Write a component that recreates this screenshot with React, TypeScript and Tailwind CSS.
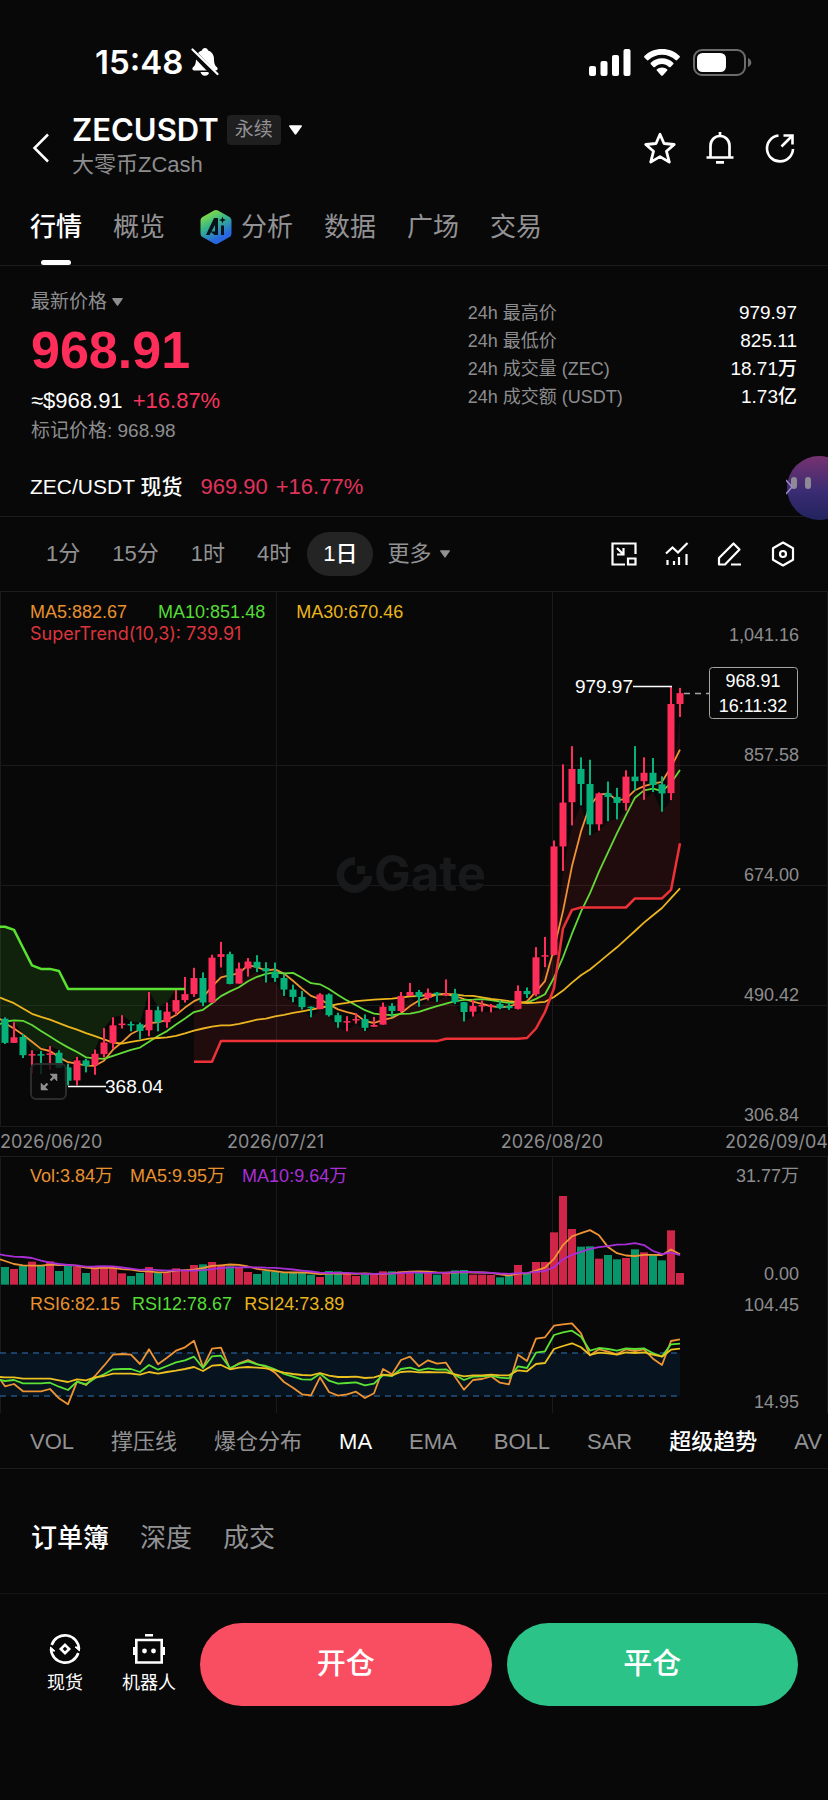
import type { ReactNode } from "react";
import clsx from "clsx";

const STEP = 9;
const COUNT = 76;
const xAt = (i: number) => 5 + i * STEP;

// [direction, high, body top, body bottom, low], measured down from the top of the plot
type Candle = [0 | 1, number, number, number, number];

const candles: Candle[] = [
	[0, 1218, 1222, 1291, 1294], [1, 1232, 1275, 1291, 1291], [0, 1266, 1274, 1326, 1334], [1, 1312, 1323, 1326, 1378],
	[0, 1314, 1323, 1326, 1380], [1, 1300, 1321, 1324, 1368], [0, 1312, 1319, 1362, 1362], [0, 1350, 1361, 1399, 1412],
	[1, 1331, 1341, 1398, 1412], [0, 1336, 1341, 1357, 1375], [1, 1310, 1322, 1354, 1382], [1, 1249, 1290, 1323, 1333],
	[1, 1218, 1241, 1292, 1308], [1, 1212, 1236, 1239, 1250], [0, 1230, 1237, 1240, 1258], [0, 1233, 1238, 1257, 1281],
	[1, 1146, 1197, 1255, 1272], [0, 1187, 1198, 1232, 1258], [1, 1176, 1202, 1232, 1248], [1, 1138, 1169, 1202, 1212],
	[1, 1103, 1152, 1169, 1176], [1, 1077, 1106, 1152, 1160], [0, 1090, 1106, 1176, 1186], [1, 1040, 1048, 1176, 1177],
	[1, 1003, 1038, 1046, 1076], [0, 1031, 1038, 1123, 1124], [1, 1062, 1079, 1122, 1122], [1, 1049, 1059, 1079, 1102],
	[0, 1041, 1060, 1076, 1089], [0, 1061, 1078, 1087, 1119], [0, 1062, 1088, 1106, 1117], [0, 1096, 1106, 1139, 1157],
	[0, 1125, 1139, 1160, 1175], [0, 1143, 1160, 1189, 1196], [0, 1187, 1188, 1192, 1218], [1, 1149, 1153, 1195, 1195],
	[0, 1150, 1153, 1212, 1216], [0, 1205, 1212, 1232, 1248], [1, 1215, 1229, 1232, 1258], [1, 1206, 1223, 1227, 1236],
	[0, 1210, 1223, 1248, 1257], [1, 1217, 1240, 1245, 1245], [1, 1176, 1188, 1239, 1239], [0, 1178, 1186, 1200, 1218],
	[1, 1146, 1157, 1200, 1203], [1, 1120, 1146, 1157, 1157], [0, 1140, 1146, 1160, 1188], [1, 1136, 1148, 1163, 1170],
	[0, 1146, 1148, 1153, 1174], [1, 1110, 1151, 1155, 1158], [0, 1137, 1151, 1175, 1180], [0, 1174, 1175, 1203, 1230],
	[1, 1168, 1186, 1202, 1216], [1, 1170, 1183, 1186, 1202], [1, 1180, 1184, 1187, 1204], [0, 1170, 1180, 1192, 1195],
	[0, 1176, 1186, 1192, 1197], [1, 1127, 1143, 1194, 1196], [0, 1133, 1143, 1152, 1163], [1, 1018, 1047, 1152, 1158],
	[1, 989, 1041, 1045, 1075], [1, 714, 731, 1040, 1042], [1, 497, 606, 731, 801], [1, 445, 510, 605, 671],
	[0, 477, 510, 553, 614], [0, 484, 553, 668, 699], [1, 577, 580, 668, 686], [0, 546, 579, 590, 659],
	[0, 564, 590, 607, 654], [1, 514, 532, 607, 629], [0, 445, 532, 545, 572], [1, 477, 521, 545, 598],
	[0, 479, 521, 556, 576], [0, 531, 554, 580, 632], [1, 275, 325, 579, 599], [1, 279, 294, 325, 362],
];

const volumes = [
	411, 417, 408, 395, 405, 394, 423, 405, 411, 429, 408, 409, 411, 430, 438, 429, 411, 428, 427, 415, 420, 405, 403, 396,
	405, 409, 411, 426, 432, 423, 424, 429, 429, 429, 434, 441, 423, 424, 432, 438, 434, 430, 424, 424, 424, 423, 427, 428,
	434, 429, 421, 420, 434, 434, 435, 442, 438, 405, 429, 396, 396, 307, 198, 297, 350, 349, 386, 375, 388, 384, 358, 367,
	375, 391, 301, 429,
];

const rsi6 = [
	769, 762, 784, 784, 784, 777, 805, 823, 755, 765, 738, 707, 674, 672, 674, 702, 658, 703, 683, 662, 652, 632, 712, 656,
	653, 717, 700, 690, 702, 711, 728, 756, 773, 793, 796, 742, 786, 797, 793, 785, 804, 790, 717, 733, 690, 680, 709, 691,
	701, 698, 740, 779, 750, 747, 739, 758, 763, 674, 693, 626, 622, 587, 583, 580, 610, 676, 658, 665, 673, 658, 663, 658,
	686, 705, 633, 628,
];
const rsi12 = [
	753, 750, 760, 760, 760, 758, 770, 780, 755, 763, 745, 733, 718, 717, 717, 726, 705, 719, 708, 697, 691, 680, 714, 679,
	677, 714, 702, 694, 703, 708, 718, 732, 740, 748, 749, 731, 752, 761, 759, 757, 766, 761, 735, 738, 717, 713, 721, 715,
	719, 718, 735, 750, 740, 739, 737, 743, 745, 709, 714, 668, 664, 615, 607, 602, 620, 662, 654, 657, 662, 655, 657, 655,
	670, 679, 643, 641,
];
const rsi24 = [
	742, 742, 746, 746, 746, 746, 751, 756, 748, 751, 742, 738, 731, 731, 731, 734, 726, 731, 726, 722, 717, 711, 723, 707,
	705, 718, 713, 711, 713, 715, 721, 728, 732, 735, 736, 729, 737, 741, 741, 740, 744, 742, 734, 736, 726, 724, 727, 726,
	727, 727, 733, 739, 736, 736, 734, 736, 736, 721, 724, 702, 699, 657, 648, 640, 652, 675, 668, 670, 674, 667, 669, 667,
	674, 680, 659, 656,
];

const priceY = (v: number) => v * 0.3508;
const subY = (v: number) => v / 3;

// Simple moving average; `seed` covers the candles that lack enough history on screen.
function movingAverage(values: number[], size: number, seed: number[]) {
	return values.map((_, i) =>
		i < size - 1 ? seed[i] : values.slice(i - size + 1, i + 1).reduce((a, b) => a + b, 0) / size,
	);
}

function points(values: number[], y: (v: number) => number, start = 0) {
	return values.map((v, i) => `${xAt(i + start)},${y(v).toFixed(1)}`).join(" ");
}

// Same, but the line enters from the left edge of the plot.
function pointsFrom(first: number, values: number[], y: (v: number) => number) {
	return `0,${y(first).toFixed(1)} ${points(values, y)}`;
}

const closes = candles.map(([up, , top, bottom]) => (up ? top : bottom));
const ma5 = movingAverage(closes, 5, [1235, 1250, 1268, 1288]);
const ma10 = movingAverage(closes, 10, [1230, 1227, 1228, 1240, 1257, 1273, 1289, 1304, 1317]);
const ma30 = movingAverage(closes, 30, [
	1168, 1178, 1193, 1208, 1217, 1225, 1235, 1245, 1253, 1263, 1272, 1281, 1290, 1293, 1288, 1284, 1279, 1277, 1275, 1271,
	1264, 1256, 1250, 1245, 1241, 1241, 1237, 1231, 1225,
]);
const volMa5 = movingAverage(volumes, 5, [393, 402, 406, 407]);
const volMa10 = movingAverage(volumes, 10, [376, 380, 381, 384, 392, 398, 402, 405, 406]);

const trendDown = [960, 969, 1020, 1070, 1080, 1080, 1086, ...Array(14).fill(1137)];
const trendUp = [
	1345, 1345, 1345, ...Array(25).fill(1286), ...Array(9).fill(1279), 1277, 1250, 1203, 1135, 965, 912, 905, 905, 905, 905,
	905, 905, 879, 879, 879, 879, 855, 722,
];
const TREND_UP_START = 21;

const areaDown = `${pointsFrom(960, trendDown, priceY)} ${candles
	.slice(0, TREND_UP_START)
	.map((c, i) => `${xAt(i)},${priceY(Math.max(c[1], trendDown[i]))}`)
	.reverse()
	.join(" ")} 0,${priceY(1218)}`;
const areaUp = `${points(trendUp, priceY, TREND_UP_START)} ${candles
	.slice(TREND_UP_START)
	.map((c, i) => `${xAt(i + TREND_UP_START)},${priceY(c[4])}`)
	.reverse()
	.join(" ")}`;

function Line({ pts, color, width = 1.8 }: { pts: string; color: string; width?: number }) {
	return <polyline points={pts} fill="none" stroke={color} strokeWidth={width} strokeLinejoin="round" />;
}

function Caret({ className }: { className?: string }) {
	return (
		<svg viewBox="0 0 12 9" className={clsx("fill-current", className)} aria-hidden="true">
			<path d="M.8 0h10.4c.7 0 1 .7.6 1.2L6.7 8.5a.9.9 0 0 1-1.4 0L.2 1.2C-.2.7.1 0 .8 0z" />
		</svg>
	);
}

function StatusBar() {
	return (
		<div className="flex h-11 items-center justify-between pr-[75px] pl-[95px]">
			<div className="flex items-center gap-2 font-[Inter] font-semibold text-[33px] leading-[44px]">
				15:48
				<svg viewBox="0 0 28 30" className="h-[30px] w-7" aria-hidden="true">
					<path
						d="M14 1c1.6 0 2.8 1 3 2.400 4 1.200 6 4.600 6 8.600 0 5.500 1.300 6.500 3.200 8.600.9 1 .5 2.900-1.200 2.900H3c-1.700 0-2.100-1.900-1.200-2.900C3.700 18.500 5 17.500 5 12c0-4 2-7.400 6-8.600C11.200 2 12.400 1 14 1zM9.500 25h9c-.5 2.200-2.300 3.700-4.500 3.700S10 27.200 9.500 25z"
						fill="#fff"
					/>
					<path d="M-1 2 25 29" stroke="#080808" strokeWidth="6" />
					<path d="M1.5 2.5 26.5 27" stroke="#fff" strokeWidth="2.200" strokeLinecap="round" />
				</svg>
			</div>
			<div className="flex items-center gap-[13px]">
				<svg viewBox="0 0 42 27" className="h-[27px] w-[42px]" fill="#fff" aria-label="信号">
					<rect x="0" y="17" width="7" height="10" rx="2" />
					<rect x="11.5" y="12" width="7" height="15" rx="2" />
					<rect x="23" y="6" width="7" height="21" rx="2" />
					<rect x="34.5" y="0" width="7" height="27" rx="2" />
				</svg>
				<svg viewBox="0 0 36 27" className="h-[27px] w-9" fill="#fff" aria-label="无线网络">
					<path d="M18 0c7 0 13.200 2.600 17.600 7 .5.5.5 1.100 0 1.600l-2.500 2.500c-.5.5-1.100.5-1.600 0C28 7.700 23.200 5.700 18 5.700S8 7.700 4.500 11.100c-.5.5-1.100.5-1.600 0L.4 8.600c-.5-.5-.5-1.100 0-1.600C4.800 2.600 11 0 18 0z" />
					<path d="M18 9.300c4.400 0 8.300 1.600 11.200 4.400.5.5.5 1.100 0 1.600l-2.600 2.600c-.5.5-1.100.4-1.600 0-1.900-1.700-4.300-2.800-7-2.800s-5.100 1.100-7 2.800c-.5.400-1.100.5-1.600 0l-2.600-2.600c-.5-.5-.5-1.100 0-1.600 2.900-2.800 6.800-4.400 11.200-4.400z" />
					<path d="M18 18.400c1.900 0 3.700.7 5 1.800.5.4.5 1.100 0 1.600l-4.200 4.600c-.5.5-1.100.5-1.600 0L13 21.800c-.5-.5-.5-1.200 0-1.600 1.300-1.100 3.100-1.800 5-1.800z" />
				</svg>
				<svg viewBox="0 0 60 27" className="h-[27px] w-[60px]" aria-label="电量">
					<rect x="1" y="1" width="51" height="25" rx="8" fill="none" stroke="#6c6c6c" strokeWidth="2" />
					<rect x="4" y="4" width="29" height="19" rx="5.5" fill="#fff" />
					<path d="M55 9c2 .6 3.300 2.300 3.300 4.500S57 17.400 55 18z" fill="#6c6c6c" />
				</svg>
			</div>
		</div>
	);
}

function Header() {
	return (
		<header className="flex items-center justify-between pt-[30px] pr-8 pl-8">
			<div className="flex items-center">
				<button type="button" aria-label="返回" className="w-10 pt-[2px]">
					<svg viewBox="0 0 18 30" className="h-[30px] w-[18px]" fill="none" stroke="#fff" strokeWidth="2.5">
						<path d="M16 1.500 2.500 15 16 28.500" />
					</svg>
				</button>
				<div>
					<div className="flex items-center">
						<h1 className="font-[Inter] font-semibold text-[31px] leading-8">ZECUSDT</h1>
						<span className="ml-2 rounded bg-[#1f1f20] px-2 text-[19px] text-[#929294] leading-[30px]">永续</span>
						<button type="button" aria-label="切换合约" className="ml-2">
							<Caret className="h-[10px] w-[13px]" />
						</button>
					</div>
					<p className="mt-[5px] text-[#8d8d8f] text-[22px] leading-7">大零币ZCash</p>
				</div>
			</div>
			<div className="flex gap-7 pt-[2px]">
				<button type="button" aria-label="收藏">
					<svg viewBox="0 0 32 32" className="size-8" fill="none" stroke="#fff" strokeWidth="2.800" strokeLinejoin="round">
						<path d="m16 2.200 4 9.300 10.200 1-7.700 6.800 2.800 10.800L16 24.600 6.700 30.100l2.800-10.800-7.700-6.800 10.200-1z" />
					</svg>
				</button>
				<button type="button" aria-label="提醒">
					<svg viewBox="0 0 32 32" className="size-8" fill="none" stroke="#fff" strokeWidth="2.700">
						<path d="M16 0v4M6.500 25V13.500a9.500 9.500 0 0 1 19 0V25M2.500 25.500h27M12 30.300h8" />
					</svg>
				</button>
				<button type="button" aria-label="分享">
					<svg viewBox="0 0 32 32" className="size-8" fill="none" stroke="#fff" strokeWidth="2.600">
						<path d="M14.500 3.500A13 13 0 1 0 29 17M17.500 14.500 28 4M19.500 3.500h9v9" />
					</svg>
				</button>
			</div>
		</header>
	);
}

function AiBadge() {
	return (
		<svg viewBox="0 0 32 36" className="h-9 w-8" aria-hidden="true">
			<defs>
				<linearGradient id="ai" x1="0.25" y1="0" x2="0.75" y2="1">
					<stop offset="0" stopColor="#8fe33c" />
					<stop offset="0.4" stopColor="#35b48b" />
					<stop offset="0.8" stopColor="#2768e0" />
				</linearGradient>
			</defs>
			<path
				d="M14 1.500a4 4 0 0 1 4 0l11.500 6.600a4 4 0 0 1 2 3.500v12.800a4 4 0 0 1-2 3.500L18 34.500a4 4 0 0 1-4 0L2.500 27.900a4 4 0 0 1-2-3.500V11.600a4 4 0 0 1 2-3.500z"
				fill="url(#ai)"
			/>
			<path d="M6 26 14 9h4v17h-3.500l-4-3.500h4.500v-6.500L9.500 26zM21 16.500h3V26h-3z" fill="#07131a" />
			<path d="m22.500 7.500.9 2.600 2.600.9-2.600.9-.9 2.600-.9-2.600-2.600-.9 2.600-.9z" fill="#07131a" />
		</svg>
	);
}

function MainTabs() {
	const tabs = ["行情", "概览", "分析", "数据", "广场", "交易"];
	return (
		<nav className="mt-[30px] flex gap-[31px] border-[#1c1c1d] border-b px-[30px] text-[26px] leading-9">
			{tabs.map((tab, i) => (
				<button
					type="button"
					key={tab}
					className={clsx("flex flex-col items-center", i === 0 ? "font-medium text-white" : "text-[#929294]", i === 2 && "ml-1")}
				>
					<span className="flex items-center gap-[9px]">
						{i === 2 && <AiBadge />}
						{tab}
					</span>
					<span className={clsx("mt-[15px] h-[5px] w-[30px] rounded-sm", i === 0 && "bg-white")} />
				</button>
			))}
		</nav>
	);
}

function PriceSummary() {
	const stats = [
		["24h 最高价", "979.97"],
		["24h 最低价", "825.11"],
		["24h 成交量 (ZEC)", "18.71万"],
		["24h 成交额 (USDT)", "1.73亿"],
	];
	return (
		<section className="flex justify-between px-[31px] pt-[22px]">
			<div>
				<button type="button" className="flex items-center gap-[5px] text-[#8d8d8f] text-[19px] leading-7">
					最新价格
					<Caret className="h-2 w-[11px]" />
				</button>
				<p className="mt-1 font-bold text-[#ff2d5a] text-[52px] leading-[60px]">968.91</p>
				<p className="mt-[5px] text-[22px] leading-8">
					≈$968.91 <span className="ml-1 text-[#f5345f]">+16.87%</span>
				</p>
				<p className="text-[#8d8d8f] text-[19px] leading-7">标记价格: 968.98</p>
			</div>
			<dl className="mt-[11px] w-[43%] text-[19px] leading-7">
				{stats.map(([label, value]) => (
					<div key={label} className="flex justify-between">
						<dt className="text-[#8d8d8f] text-[18px]">{label}</dt>
						<dd className="font-medium">{value}</dd>
					</div>
				))}
			</dl>
		</section>
	);
}

function SpotRow() {
	return (
		<a href="#spot" className="relative flex items-center border-[#1c1c1d] border-b px-[30px] pt-7 pb-[15px] text-[22px] leading-7">
			<span className="font-medium text-[21px]">ZEC/USDT 现货</span>
			<span className="ml-[18px] text-[#e0335c]">969.90</span>
			<span className="ml-2 text-[#e0335c]">+16.77%</span>
			<svg viewBox="0 0 42 64" className="absolute right-0 -bottom-1 h-16 w-[42px]" aria-hidden="true">
				<defs>
					<linearGradient id="orb" x1="0" y1="0" x2="0" y2="1">
						<stop offset="0" stopColor="#75326f" />
						<stop offset="0.55" stopColor="#3b2c73" />
						<stop offset="1" stopColor="#22235e" />
					</linearGradient>
				</defs>
				<circle cx="33" cy="32" r="32" fill="url(#orb)" />
				<rect x="5" y="21" width="6" height="12" rx="3" fill="#8e8996" />
				<rect x="19" y="21" width="6" height="12" rx="3" fill="#8e8996" />
				<path d="m0 24 6 7-6 7" fill="none" stroke="#9c86cf" strokeWidth="1.5" />
			</svg>
		</a>
	);
}

function ToolIcon({ label, children }: { label: string; children: ReactNode }) {
	return (
		<button type="button" aria-label={label}>
			<svg viewBox="0 0 26 26" className="size-[26px]" fill="none" stroke="#fff" strokeWidth="2.2">
				{children}
			</svg>
		</button>
	);
}

function IntervalBar() {
	const intervals = ["1分", "15分", "1时", "4时", "1日"];
	return (
		<div className="flex items-center justify-between border-[#1c1c1d] border-b py-[15px] pr-8 pl-[30px] text-[22px] leading-[44px]">
			<div className="flex">
				{intervals.map((interval) => (
					<button
						type="button"
						key={interval}
						className={clsx("rounded-full px-4", interval === "1日" ? "bg-[#242425] font-medium text-white" : "text-[#929294]")}
					>
						{interval}
					</button>
				))}
				<button type="button" className="flex items-center gap-2 pl-[14px] text-[#929294]">
					更多
					<Caret className="h-2 w-[10px]" />
				</button>
			</div>
			<div className="flex gap-[27px]">
				<ToolIcon label="小窗">
					<path d="M14 23.500H1.500V2.500h23V13M6 7l6 6M12.500 7v6.500H6" />
					<path d="M17 17.500h7.500v6H17z" />
				</ToolIcon>
				<ToolIcon label="指标">
					<path d="m2 12.500 6.500-6 5.500 5 9.500-9.500M3.500 19v5M10 20v4M15 16v8M22.500 13v11" />
				</ToolIcon>
				<ToolIcon label="画线">
					<path d="M2 23.500v-6.500L16.500 2.500 22.500 8.500 8 23.500zM14 23.500h10" strokeLinejoin="round" />
				</ToolIcon>
				<ToolIcon label="设置">
					<path d="M13 1.500 23 7.300v11.400L13 24.500 3 18.700V7.300z" strokeLinejoin="round" />
					<circle cx="13" cy="13" r="3" />
				</ToolIcon>
			</div>
		</div>
	);
}

const GRID = "#1a1a1b";

function PriceChart() {
	const axis: [string, number][] = [["1,041.16", 51], ["857.58", 171], ["674.00", 291], ["490.42", 411], ["306.84", 531]];
	return (
		<div className="relative">
			<svg viewBox="0 2 828 535" className="block w-full" role="img" aria-label="K线图">
				<g stroke={GRID} strokeWidth="1">
					{[175.5, 295.5, 415.5, 536.5].map((y) => <path key={y} d={`M0 ${y}H828`} />)}
					{[0.5, 276.5, 552.5, 827.5].map((x) => <path key={x} d={`M${x} 2V537`} />)}
				</g>
				<g fill="#18191b">
					<path d="M355 267v8a10 10 0 1 0 9 11h8.500A18 18 0 1 1 355 267z" />
					<path d="M357 276h8v8h-8z" />
					<text x="374" y="301" className="font-[Inter] font-bold text-[49px]">Gate</text>
				</g>
				<polygon points={areaDown} fill="#4bd829" fillOpacity="0.12" />
				<polygon points={areaUp} fill="#f03038" fillOpacity="0.11" />
				<Line pts={pointsFrom(1222, ma5, priceY)} color="#ee9433" />
				<Line pts={pointsFrom(1238, ma10, priceY)} color="#62da38" />
				<Line pts={pointsFrom(1162, ma30, priceY)} color="#ecb41f" />
				{candles.map(([up, high, top, bottom, low], i) => (
					<g key={xAt(i)} fill={up ? "#ff2d5a" : "#07b17a"}>
						<rect x={xAt(i) - 1} y={priceY(high)} width="2" height={priceY(low - high)} />
						<rect x={xAt(i) - 3.5} y={priceY(top)} width="7" height={Math.max(priceY(bottom - top), 1.5)} />
					</g>
				))}
				<Line pts={pointsFrom(960, trendDown, priceY)} color="#59e031" width={2.5} />
				<Line pts={points(trendUp, priceY, TREND_UP_START)} color="#ed3137" width={2.5} />
				<g stroke="#fff" strokeWidth="1.5">
					<path d="M633 96.500h39M68 496.500h38" />
					<path d="M684 103.500h26" stroke="#a5a5a5" strokeDasharray="6 5" />
				</g>
				<g fill="#fff" className="text-[19px]">
					<text x="633" y="103" textAnchor="end">979.97</text>
					<text x="105" y="503">368.04</text>
				</g>
				<rect x="709.5" y="77.5" width="88" height="51" rx="3" fill="#080808" stroke="#a5a5a5" />
				<g fill="#fff" textAnchor="middle" className="text-[18px]">
					<text x="753" y="97">968.91</text>
					<text x="753" y="122">16:11:32</text>
				</g>
				<g fill="#8d8d8f" textAnchor="end" className="text-[18px]">
					{axis.map(([label, y]) => <text key={label} x="799" y={y}>{label}</text>)}
				</g>
			</svg>
			<div className="absolute top-[9px] left-[30px] text-[18px] leading-[22px]">
				<div className="flex gap-[31px]">
					<span className="text-[#e8912f]">MA5:882.67</span>
					<span className="text-[#55dc36]">MA10:851.48</span>
					<span className="text-[#e9b51d]">MA30:670.46</span>
				</div>
				<div className="font-[Inter] text-[#db343c]">SuperTrend(10,3): 739.91</div>
			</div>
			<button
				type="button"
				aria-label="全屏"
				className="absolute bottom-[27px] left-[30px] flex size-[37px] items-center justify-center rounded-md border-2 border-[#2c2c2d] bg-[#0b0b0b]/80"
			>
				<svg viewBox="0 0 18 18" className="size-[18px]" fill="#8d8d8f" stroke="#8d8d8f" strokeWidth="2.4">
					<path d="M10.500 7.500 15 3M7.500 10.500 3 15" />
					<path d="M10 1h7v7zM1 10v7h7z" strokeWidth="0.5" />
				</svg>
			</button>
		</div>
	);
}

function DateAxis() {
	return (
		<div className="grid grid-cols-3 border-[#1c1c1d] border-b font-[Inter] text-[#8d8d8f] text-[18px] leading-[29px]">
			<div className="flex justify-between">
				<span>2026/06/20</span>
				<span className="-mr-12">2026/07/21</span>
			</div>
			<div className="flex justify-end">
				<span className="-mr-[51px]">2026/08/20</span>
			</div>
			<div className="text-right">2026/09/04</div>
		</div>
	);
}

function SubCharts() {
	const axis: [string, number][] = [["31.77万", 52], ["0.00", 150], ["104.45", 181], ["14.95", 278]];
	const right = xAt(COUNT - 1);
	return (
		<div className="relative">
			<svg viewBox="0 27 828 260" className="block w-full" role="img" aria-label="成交量与RSI">
				<g stroke={GRID} strokeWidth="1">
					{[0.5, 276.5, 552.5, 827.5].map((x) => <path key={x} d={`M${x} 27V283`} />)}
				</g>
				{volumes.map((top, i) => (
					<rect
						key={xAt(i)}
						x={xAt(i) - 4}
						y={subY(top)}
						width="8"
						height={subY(464 - top)}
						fill={candles[i][0] ? "#cf2549" : "#08956a"}
					/>
				))}
				<Line pts={pointsFrom(388, volMa5, subY)} color="#ee9433" />
				<Line pts={pointsFrom(373, volMa10, subY)} color="#a82fd8" />
				<rect x="0" y="223" width={right} height="43" fill="#07131f" />
				<path d={`M0 223H${right}M0 266H${right}`} stroke="#24517f" strokeWidth="1.5" strokeDasharray="6 5" />
				<Line pts={pointsFrom(748, rsi6, subY)} color="#ee9433" />
				<Line pts={pointsFrom(750, rsi12, subY)} color="#5be234" />
				<Line pts={pointsFrom(741, rsi24, subY)} color="#ecc01f" />
				<g fill="#8d8d8f" textAnchor="end" className="text-[18px]">
					{axis.map(([label, y]) => <text key={label} x="799" y={y}>{label}</text>)}
				</g>
			</svg>
			<div className="absolute top-[6px] left-[30px] flex gap-[17px] text-[18px] leading-[26px]">
				<span className="text-[#e8912f]">Vol:3.84万</span>
				<span className="text-[#e8912f]">MA5:9.95万</span>
				<span className="text-[#a82fd8]">MA10:9.64万</span>
			</div>
			<div className="absolute top-[134px] left-[30px] flex gap-3 text-[18px] leading-[26px]">
				<span className="text-[#e8912f]">RSI6:82.15</span>
				<span className="text-[#55dc36]">RSI12:78.67</span>
				<span className="text-[#e9b51d]">RSI24:73.89</span>
			</div>
		</div>
	);
}

function IndicatorTabs() {
	const indicators = ["VOL", "撑压线", "爆仓分布", "MA", "EMA", "BOLL", "SAR", "超级趋势", "AV"];
	const active = ["MA", "超级趋势"];
	return (
		<div className="flex gap-[37px] overflow-hidden border-[#1c1c1d] border-b pt-[9px] pb-[10px] pl-[30px] text-[22px] leading-8">
			{indicators.map((name) => (
				<button
					type="button"
					key={name}
					className={clsx("shrink-0", active.includes(name) ? "font-medium text-white" : "text-[#929294]")}
				>
					{name}
				</button>
			))}
		</div>
	);
}

function OrderTabs() {
	return (
		<div className="flex gap-[31px] border-[#151516] border-b px-[31px] pt-[51px] pb-[37px] text-[#929294] text-[26px] leading-9">
			<button type="button" className="font-medium text-white">订单簿</button>
			<button type="button">深度</button>
			<button type="button">成交</button>
		</div>
	);
}

function TradeBar() {
	return (
		<footer className="flex items-center gap-6 pt-[29px] pr-[30px] pb-20 pl-[47px]">
			<div className="flex gap-[39px] text-[18px] leading-7">
				<button type="button" className="flex flex-col items-center gap-1">
					<svg viewBox="0 0 32 32" className="size-8" fill="none" stroke="#fff" strokeWidth="2.6">
						<path d="M2.700 12A14 14 0 0 1 30 16M2 16A14 14 0 0 0 29.300 20" />
						<path d="M26 14h4.500v4zM6 18H1.500v-4z" fill="#fff" strokeWidth="1" />
						<path d="m16 11.800 4.200 4.200-4.200 4.200-4.200-4.200z" />
					</svg>
					现货
				</button>
				<button type="button" className="flex flex-col items-center gap-1">
					<svg viewBox="0 0 32 32" className="size-8" fill="none" stroke="#fff" strokeWidth="2.6">
						<path d="M3.300 7h25.400v22.500H3.300zM12 2.300h8M1.300 14v8M30.700 14v8" />
						<g fill="#fff" stroke="none">
							<circle cx="11.5" cy="18" r="2.4" />
							<circle cx="20.5" cy="18" r="2.4" />
						</g>
					</svg>
					机器人
				</button>
			</div>
			<div className="flex flex-1 gap-[15px] font-medium text-[29px] leading-[83px]">
				<button type="button" className="flex-1 rounded-full bg-[#f94d61]">开仓</button>
				<button type="button" className="flex-1 rounded-full bg-[#2bc388]">平仓</button>
			</div>
		</footer>
	);
}

export default function App() {
	return (
		<main className="min-h-screen overflow-x-hidden bg-[#080808] pt-10 font-['Liberation_Sans','Noto_Sans_CJK_SC',sans-serif] text-white">
			<StatusBar />
			<Header />
			<MainTabs />
			<PriceSummary />
			<SpotRow />
			<IntervalBar />
			<PriceChart />
			<DateAxis />
			<SubCharts />
			<IndicatorTabs />
			<OrderTabs />
			<TradeBar />
		</main>
	);
}
